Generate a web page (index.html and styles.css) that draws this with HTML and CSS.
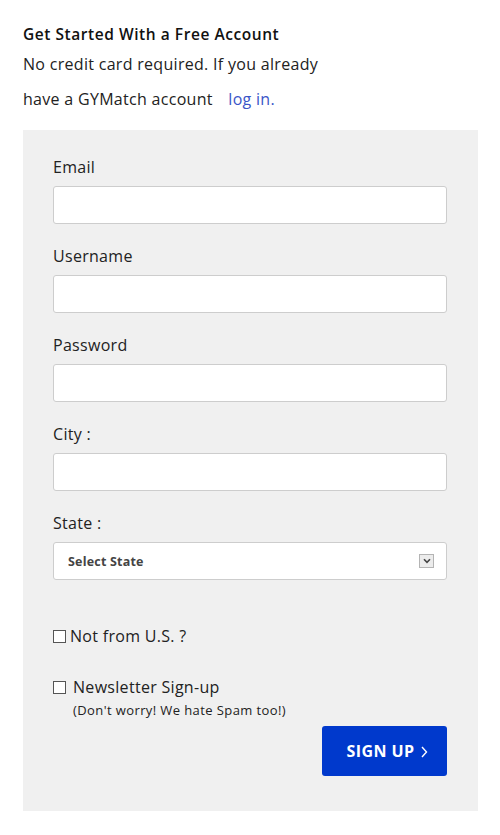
FILE: index.html
```html
<!DOCTYPE html>
<html>
<head>
<meta charset="utf-8">
<link rel="stylesheet" href="styles.css">
</head>
<body>
<div class="page">
  <div class="intro">
    <h1 class="title">Get Started With a Free Account</h1>
    <p class="sub first">No credit card required. If you already</p>
    <p class="sub">have a GYMatch account <a class="login" href="#">log in.</a></p>
  </div>
  <form class="panel">
    <div class="field">
      <label class="label">Email</label>
      <input class="input" type="text">
    </div>
    <div class="field">
      <label class="label">Username</label>
      <input class="input" type="text">
    </div>
    <div class="field">
      <label class="label">Password</label>
      <input class="input" type="password">
    </div>
    <div class="field">
      <label class="label">City :</label>
      <input class="input" type="text">
    </div>
    <div class="field">
      <label class="label">State :</label>
      <div class="select-wrap">
        <select class="select"><option>Select State</option></select>
        <span class="select-arrow">
          <svg width="8" height="6" viewBox="0 0 8 6"><path d="M1 1.2 L4 4.4 L7 1.2" fill="none" stroke="#444" stroke-width="1.6"/></svg>
        </span>
      </div>
    </div>
    <div class="check-row first">
      <span class="box"></span><span class="check-text tight">Not from U.S. ?</span>
    </div>
    <div class="check-row second">
      <span class="box"></span><span class="check-text">Newsletter Sign-up</span>
    </div>
    <p class="note">(Don't worry! We hate Spam too!)</p>
    <div class="actions">
      <button class="btn" type="button">SIGN UP <svg class="chev" width="7" height="12" viewBox="0 0 7 12"><path d="M1 1 L5.5 6 L1 11" fill="none" stroke="#fff" stroke-width="1.4"/></svg></button>
    </div>
  </form>
</div>
</body>
</html>
```
FILE: styles.css
```css
* { box-sizing: border-box; }
html, body { margin: 0; padding: 0; background: #fff; }
body { font-family: "Open Sans", "Lato", sans-serif; color: #222; }
.page { padding: 0 22px 0 23px; }
.intro { padding-top: 24px; }
.title { margin: 0; font-size: 15.5px; font-weight: 600; line-height: 20px; color: #111; letter-spacing: 0.55px; }
.sub { margin: 0; font-size: 16px; line-height: 35px; color: #222; letter-spacing: 0.3px; }
.sub.first { margin-top: 3px; }
.login { color: #3a55c8; text-decoration: none; margin-left: 11px; }
.panel { background: #f0f0f0; margin-top: 13px; padding: 27px 31px 35px 30px; display: flex; flex-direction: column; }
.field { display: flex; flex-direction: column; margin-bottom: 22px; }
.label { font-size: 16px; line-height: 20px; color: #222; margin-bottom: 9px; letter-spacing: 0.3px; }
.input { height: 38px; border: 1px solid #cdcdcd; border-radius: 3px; background: #fff; width: 100%; }
.select-wrap { position: relative; }
.select { -webkit-appearance: none; appearance: none; width: 100%; height: 38px; border: 1px solid #cdcdcd; border-radius: 3px; background: #fff; padding: 0 14px; font-family: "Open Sans", sans-serif; font-weight: 700; font-size: 12.5px; letter-spacing: 0.2px; color: #444; }
.select-arrow { position: absolute; right: 13px; top: 12px; width: 15px; height: 14px; border: 1px solid #b4b4b4; background: #ececec; display: flex; align-items: center; justify-content: center; }
.check-row { display: flex; align-items: center; font-size: 16px; line-height: 20px; color: #222; letter-spacing: 0.3px; }
.check-row.first { margin-top: 24px; }
.check-row.second { margin-top: 31px; }
.box { width: 13px; height: 13px; border: 1px solid #555; background: #fff; flex: none; }
.check-text { margin-left: 7px; }
.check-text.tight { margin-left: 4px; }
.note { margin: 5px 0 0 20px; font-size: 13px; line-height: 16px; color: #222; letter-spacing: 0.4px; }
.actions { display: flex; justify-content: flex-end; margin-top: 8px; }
.btn { width: 125px; height: 50px; background: #0039cc; color: #fff; border: none; border-radius: 3px; font-family: "Open Sans", sans-serif; font-weight: 700; font-size: 16px; letter-spacing: 0.4px; display: flex; align-items: center; justify-content: center; gap: 7px; padding: 0 0 0 6px; }
.chev { margin-top: 1px; }
```
